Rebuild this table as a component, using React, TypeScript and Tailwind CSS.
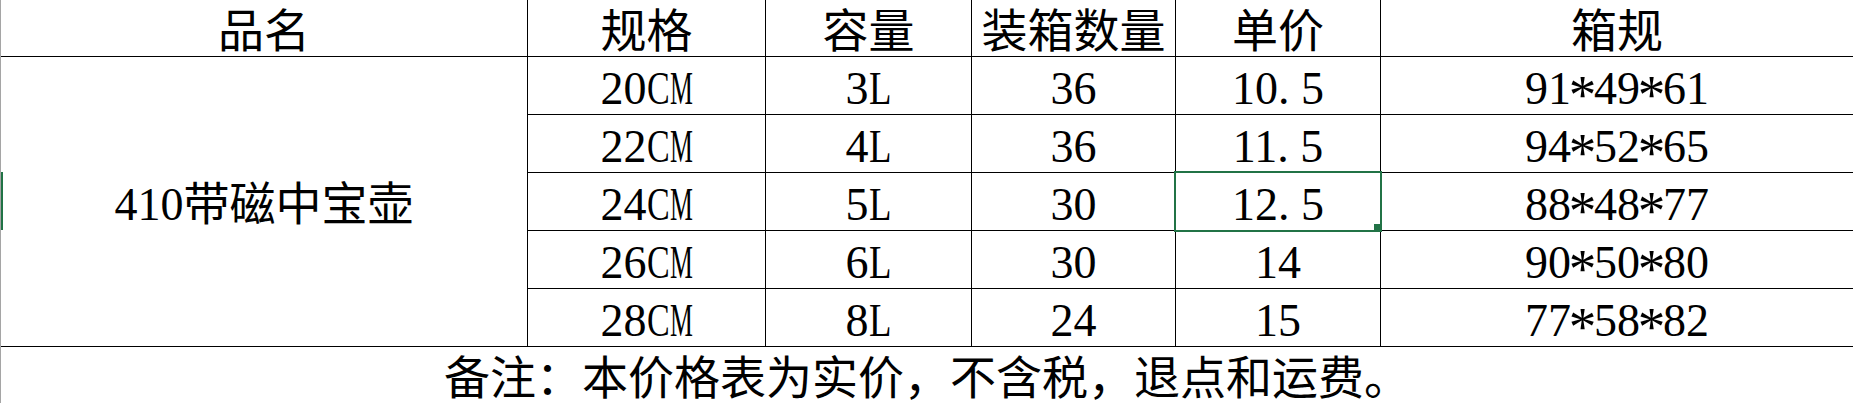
import React from "react";

const rows = [
  { size: "20CM", cap: "3L", qty: "36", price: "10.5", box: "91*49*61" },
  { size: "22CM", cap: "4L", qty: "36", price: "11.5", box: "94*52*65" },
  { size: "24CM", cap: "5L", qty: "30", price: "12.5", box: "88*48*77" },
  { size: "26CM", cap: "6L", qty: "30", price: "14", box: "90*50*80" },
  { size: "28CM", cap: "8L", qty: "24", price: "15", box: "77*58*82" },
];

// letters are squeezed to half width, like the Song face the sheet uses
const squeeze: Record<string, string> = {
  C: "scale-x-[0.74]",
  M: "scale-x-[0.56]",
  L: "scale-x-[0.8]",
};

const Half = ({ t }: { t: string }) => (
  <span>
    {t.split("").map((c, i) => {
      if (/[0-9]/.test(c)) return <React.Fragment key={i}>{c}</React.Fragment>;
      if (c === ".")
        return (
          <span key={i} className="inline-block w-[0.5em] text-left">
            .
          </span>
        );
      if (c === "*")
        return (
          <span key={i} className="inline-block w-[0.5em] text-center translate-y-[0.14em] scale-[1.2]">
            *
          </span>
        );
      return (
        <span key={i} className="inline-block w-[0.5em]">
          <span className={`inline-block origin-left ${squeeze[c] ?? ""}`}>{c}</span>
        </span>
      );
    })}
  </span>
);

const cell = "flex items-center justify-center pt-[7px] border-black";

export default function App() {
  return (
    <div
      className="relative h-[403px] w-full overflow-hidden border-l border-[#a5a5a5] bg-white font-[family-name:'Liberation_Serif','Noto_Sans_CJK_SC',serif] text-[46px] leading-none text-black"
    >
      <div className="grid grid-cols-[527px_238px_206px_204px_205px_1fr] grid-rows-[57px_repeat(5,58px)_57px]">
        <div className={`${cell} border-r border-b`}>品名</div>
        <div className={`${cell} border-r border-b`}>规格</div>
        <div className={`${cell} border-r border-b`}>容量</div>
        <div className={`${cell} border-r border-b`}>装箱数量</div>
        <div className={`${cell} border-r border-b`}>单价</div>
        <div className={`${cell} border-b`}>箱规</div>

        <div className={`${cell} row-span-5 border-r border-b`}>
          <span>410带磁中宝壶</span>
        </div>
        {rows.map((r, i) => (
          <React.Fragment key={r.size}>
            <div className={`${cell} border-r border-b`}>
              <Half t={r.size} />
            </div>
            <div className={`${cell} border-r border-b`}>
              <Half t={r.cap} />
            </div>
            <div className={`${cell} border-r border-b`}>
              <Half t={r.qty} />
            </div>
            <div className={`${cell} relative border-r border-b`}>
              <Half t={r.price} />
              {i === 2 && (
                <div className="absolute -left-[2px] -top-[2px] z-10 h-[61px] w-[208px] border-2 border-[#217346]">
                  <div className="absolute -bottom-[2px] -right-[2px] h-[8px] w-[8px] bg-[#217346]" />
                </div>
              )}
            </div>
            <div className={`${cell} border-b`}>
              <Half t={r.box} />
            </div>
          </React.Fragment>
        ))}

        <div className={`${cell} col-span-6`}>备注：本价格表为实价，不含税，退点和运费。</div>
      </div>
      <div className="absolute left-0 top-[172px] h-[58px] w-[2px] bg-[#217346]" />
    </div>
  );
}
